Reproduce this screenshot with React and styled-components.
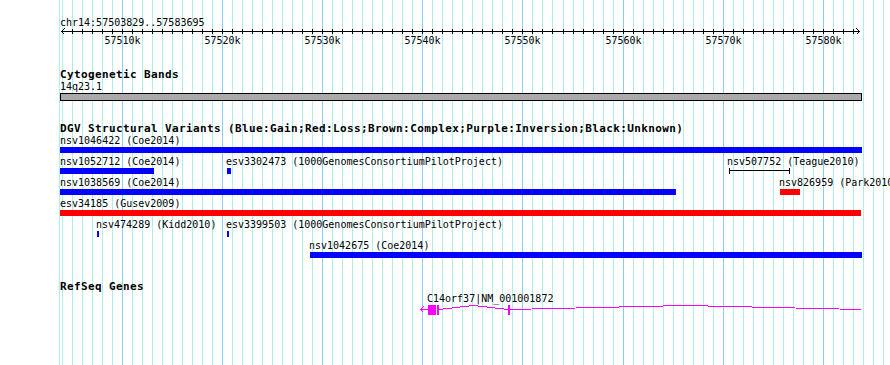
import React from 'react';
import styled, { createGlobalStyle } from 'styled-components';

const MONO = '"DejaVu Sans Mono", "Liberation Mono", monospace';

const GlobalStyle = createGlobalStyle`
  html, body {
    margin: 0;
    padding: 0;
    background: #fff;
  }
`;

const Page = styled.div`
  position: relative;
  width: 890px;
  height: 365px;
  overflow: hidden;
  background: #fff;
  color: #000;
  font-family: ${MONO};
`;

const GridLayer = styled.svg`
  position: absolute;
  left: 0;
  top: 0;
`;

const Panel = styled.div`
  position: relative;
  display: flex;
  flex-direction: column;
  width: 802px;
  margin-left: 60px;
`;

const RangeLabel = styled.div`
  margin-top: 18px;
  height: 9px;
  font-size: 10px;
  line-height: 9px;
  white-space: nowrap;
`;

const Axis = styled.svg`
  display: block;
  overflow: visible;
`;

const TickLabel = styled.text`
  font-family: ${MONO};
  font-size: 10px;
  text-anchor: middle;
  fill: #000;
`;

const Track = styled.section`
  display: flex;
  flex-direction: column;
  margin-top: ${(p) => p.$gap}px;
`;

const TrackTitle = styled.h2`
  margin: 0;
  height: 12px;
  font: bold 11px/12px ${MONO};
  letter-spacing: 0.38px;
  white-space: nowrap;
`;

const BandLabel = styled.div`
  height: 12px;
  font-size: 10px;
  line-height: 12px;
`;

const Band = styled.div`
  box-sizing: border-box;
  height: 8px;
  border: 1px solid #000;
  background: #aaaaaa;
`;

const FeatureRow = styled.div`
  position: relative;
  height: ${(p) => p.$h}px;
`;

const FeatureLabel = styled.span.attrs((p) => ({ style: { left: p.$x } }))`
  position: absolute;
  top: 0;
  font-size: 10px;
  line-height: 11px;
  white-space: nowrap;
`;

const FeatureBar = styled.div.attrs((p) => ({ style: { left: p.$x, width: p.$w } }))`
  position: absolute;
  top: 12px;
  height: 6px;
  background: ${(p) => p.$color};
`;

const SpanLine = styled.div.attrs((p) => ({ style: { left: p.$x, width: p.$w } }))`
  position: absolute;
  top: 12px;
  height: 6px;
  box-sizing: border-box;
  border-left: 1px solid #000;
  border-right: 1px solid #000;

  &::before {
    content: '';
    position: absolute;
    left: 0;
    right: 0;
    top: 2px;
    height: 1px;
    background: #000;
  }
`;

const GeneGlyph = styled.svg`
  position: absolute;
  left: 0;
  top: 11px;
  overflow: visible;
`;

const BLUE = '#0000ff';
const RED = '#ff0000';
const MAGENTA = '#ff00ff';

// grid / tick positions (1 kb apart)
const minorX = (k) => Math.floor(62.3 + 10.014 * k);
const gridLines = Array.from({ length: 83 }, (_, k) => ({ x: minorX(k), major: (k - 6) % 10 === 0 }));
const majors = [57510, 57520, 57530, 57540, 57550, 57560, 57570, 57580].map((v, i) => ({
  label: `${v}k`,
  x: minorX(6 + i * 10) + 0.5,
}));

const dgvRows = [
  {
    labels: [{ x: 0, text: 'nsv1046422 (Coe2014)' }],
    bars: [{ x: 0, w: 802, color: BLUE }],
  },
  {
    labels: [
      { x: 0, text: 'nsv1052712 (Coe2014)' },
      { x: 166, text: 'esv3302473 (1000GenomesConsortiumPilotProject)' },
      { x: 667, text: 'nsv507752 (Teague2010)' },
    ],
    bars: [
      { x: 0, w: 94, color: BLUE },
      { x: 167, w: 4, color: BLUE },
    ],
    lines: [{ x: 669, w: 61 }],
  },
  {
    labels: [
      { x: 0, text: 'nsv1038569 (Coe2014)' },
      { x: 719, text: 'nsv826959 (Park2010)' },
    ],
    bars: [
      { x: 0, w: 616, color: BLUE },
      { x: 720, w: 20, color: RED },
    ],
  },
  {
    labels: [{ x: 0, text: 'esv34185 (Gusev2009)' }],
    bars: [{ x: 0, w: 801, color: RED }],
  },
  {
    labels: [
      { x: 36, text: 'nsv474289 (Kidd2010)' },
      { x: 166, text: 'esv3399503 (1000GenomesConsortiumPilotProject)' },
    ],
    bars: [
      { x: 37, w: 2, color: BLUE },
      { x: 167, w: 2, color: BLUE },
    ],
  },
  {
    labels: [{ x: 249, text: 'nsv1042675 (Coe2014)' }],
    bars: [{ x: 250, w: 552, color: BLUE }],
  },
];

const Grid = () => (
  <GridLayer width="890" height="365" shapeRendering="crispEdges">
    <rect x="59" y="0" width="1" height="365" fill="#afeeee" />
    {gridLines.map((g) => (
      <rect key={g.x} x={g.x} y="0" width="1" height="365" fill={g.major ? '#87cefa' : '#afeeee'} />
    ))}
  </GridLayer>
);

const Ruler = () => (
  <>
    <RangeLabel>chr14:57503829..57583695</RangeLabel>
    <Axis width="830" height="22" viewBox="60 27 830 22" shapeRendering="crispEdges">
      <g stroke="#000" fill="none">
        <path d="M61 31.5 H859.5" />
        <path d="M64.5 28.5 L61.5 31.5 L64.5 34.5" />
        <path d="M856.5 28.5 L859.5 31.5 L856.5 34.5" />
        {gridLines
          .filter((g) => g.x > 62 && g.x < 858)
          .map((g) => (
            <path key={g.x} d={`M${g.x + 0.5} 29 V34`} />
          ))}
      </g>
      {majors.map((m) => (
        <TickLabel key={m.label} x={m.x} y="44">
          {m.label}
        </TickLabel>
      ))}
    </Axis>
  </>
);

const Gene = () => (
  <GeneGlyph width="830" height="12" viewBox="60 304 830 12" shapeRendering="crispEdges">
    <g stroke={MAGENTA} fill="none">
      <path d="M420 309.5 H428 M423.5 306.5 L420.5 309.5 L423.5 312.5" />
      <path d="M439 309.5 L473.5 305.5 L508 309.5 M510 309.5 L685.5 305.5 L861 309.5" />
    </g>
    <g fill={MAGENTA}>
      <rect x="428" y="305" width="8" height="10" />
      <rect x="437" y="305" width="2" height="10" />
      <rect x="508" y="305" width="2" height="10" />
    </g>
  </GeneGlyph>
);

export default function App() {
  return (
    <Page>
      <GlobalStyle />
      <Grid />
      <Panel>
        <Ruler />

        <Track $gap={20}>
          <TrackTitle>Cytogenetic Bands</TrackTitle>
          <BandLabel>14q23.1</BandLabel>
          <Band />
        </Track>

        <Track $gap={22}>
          <TrackTitle>
            DGV Structural Variants (Blue:Gain;Red:Loss;Brown:Complex;Purple:Inversion;Black:Unknown)
          </TrackTitle>
          {dgvRows.map((row, i) => (
            <FeatureRow key={i} $h={21}>
              {row.labels.map((l) => (
                <FeatureLabel key={l.text} $x={l.x}>
                  {l.text}
                </FeatureLabel>
              ))}
              {row.bars.map((b, j) => (
                <FeatureBar key={j} $x={b.x} $w={b.w} $color={b.color} />
              ))}
              {(row.lines || []).map((s, j) => (
                <SpanLine key={j} $x={s.x} $w={s.w} />
              ))}
            </FeatureRow>
          ))}
        </Track>

        <Track $gap={20}>
          <TrackTitle>RefSeq Genes</TrackTitle>
          <FeatureRow $h={23}>
            <FeatureLabel $x={367}>C14orf37|NM_001001872</FeatureLabel>
            <Gene />
          </FeatureRow>
        </Track>
      </Panel>
    </Page>
  );
}
